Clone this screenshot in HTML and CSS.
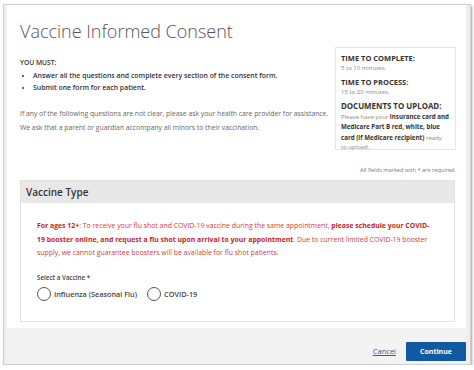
FILE: index.html
```html
<!DOCTYPE html>
<html>
<head>
	<title>Vaccine Informed Consent</title>
	<meta name="viewport" content="width=device-width, initial-scale=1">
	<link rel="stylesheet" href="styles.css">
</head>
<body>

	<div class="modal">
		<div class="modal-body">
			<h1 class="title">Vaccine Informed Consent</h1>

			<div class="intro">
				<div class="intro-main">
					<p class="must">YOU MUST:</p>
					<ul class="rules">
						<li>Answer all the questions and complete every section of the consent form.</li>
						<li>Submit one form for each patient.</li>
					</ul>
					<p class="note first">If any of the following questions are not clear, please ask your health care provider for assistance.</p>
					<p class="note">We ask that a parent or guardian accompany all minors to their vaccination.</p>
				</div>

				<aside class="info">
					<h4>TIME TO COMPLETE:</h4>
					<p>5 to 10 minutes.</p>
					<h4 class="gap">TIME TO PROCESS:</h4>
					<p>15 to 20 minutes.</p>
					<h4 class="gap big">DOCUMENTS TO UPLOAD:</h4>
					<p class="docs">Please have your <b>insurance card and<br>Medicare Part B red, white, blue<br>card (if Medicare recipient)</b> ready<br>to upload.</p>
				</aside>
			</div>

			<p class="required">All fields marked with * are required.</p>

			<div class="card">
				<div class="card-head">Vaccine Type</div>
				<div class="card-body">
					<p class="notice"><b>For ages 12+</b>: To receive your flu shot and COVID-19 vaccine during the same appointment, <b>please schedule your COVID-<br>19 booster online, and request a flu shot upon arrival to your appointment</b>. Due to current limited COVID-19 booster<br>supply, we cannot guarantee boosters will be available for flu shot patients.</p>

					<div class="field-label">Select a Vaccine *</div>
					<div class="radios">
						<label class="radio"><span class="dot"></span>Influenza (Seasonal Flu)</label>
						<label class="radio"><span class="dot"></span>COVID-19</label>
					</div>
				</div>
			</div>
		</div>

		<div class="modal-foot">
			<a href="#" class="cancel">Cancel</a>
			<button class="continue">Continue</button>
		</div>
	</div>

</body>
</html>
```

FILE: styles.css
```css
* {
	box-sizing: border-box;
}

html, body {
	margin: 0;
	background: #fff;
	font-family: "Open Sans", "Noto Sans", sans-serif;
	color: #555;
}

.modal {
	margin: 4px 3px 0 3px;
	padding: 0 4px 0 3px;
	background-color: #efefef;
	border: 1px solid #cfcfcf;
	box-shadow: 1px 2px 2px rgba(0, 0, 0, 0.35);
}

.modal-body {
	background: #fff;
	padding: 12px 10px 6px 13px;
}

.title {
	margin: 0;
	font-size: 18px;
	line-height: 28px;
	font-weight: 300;
	color: #555;
}

.intro {
	display: flex;
	align-items: flex-start;
	margin-top: 2px;
}

.intro-main {
	flex: 1;
	padding-top: 11px;
}

.must {
	margin: 0;
	font-size: 6.7px;
	line-height: 10px;
	font-weight: 600;
	color: #333;
}

.rules {
	margin: 2px 0 0 0;
	padding-left: 13px;
	font-size: 6.9px;
	line-height: 12px;
	font-weight: 600;
	color: #333;
}

.note {
	margin: 0;
	font-size: 6.8px;
	line-height: 14px;
	color: #666;
}

.note.first {
	margin-top: 13px;
}

.info {
	width: 121px;
	height: 103px;
	border: 1px solid #e6e6e6;
	padding: 5px 5px 0 5px;
}

.info h4 {
	margin: 0;
	font-size: 7.5px;
	line-height: 10px;
	font-weight: 700;
	color: #333;
}

.info h4.gap {
	margin-top: 4px;
}

.info h4.big {
	font-size: 7.9px;
}

.info p {
	margin: 1px 0 0 0;
	font-size: 6px;
	line-height: 9px;
	color: #888;
}

.info p.docs {
	line-height: 9.4px;
	white-space: nowrap;
}

.info p b {
	color: #333;
	font-size: 6.2px;
}

.required {
	margin: 15px 0 0 0;
	text-align: right;
	font-size: 5.6px;
	line-height: 10px;
	color: #777;
}

.card {
	margin-top: 5px;
	margin-right: 1px;
	border: 1px solid #e2e2e2;
}

.card-head {
	height: 22px;
	line-height: 22px;
	padding-left: 5px;
	background-color: #e8e8e8;
	font-size: 10px;
	font-weight: 600;
	color: #333;
}

.card-body {
	padding: 16px 10px 20px 16px;
}

.notice {
	margin: 0;
	font-size: 6.9px;
	line-height: 13.5px;
	color: #d9373d;
	white-space: nowrap;
}

.notice b {
	color: #cc2229;
	font-weight: 700;
}

.field-label {
	margin-top: 13px;
	font-size: 6.3px;
	line-height: 10px;
	color: #444;
	font-weight: 600;
}

.radios {
	display: flex;
	gap: 10px;
	margin-top: 4px;
}

.radio {
	display: flex;
	align-items: center;
	gap: 3px;
	font-size: 7.3px;
	font-weight: 600;
	color: #444;
}

.dot {
	width: 14px;
	height: 14px;
	border-radius: 50%;
	border: 1px solid #555;
	background: #fff;
}

.modal-foot {
	height: 36px;
	display: flex;
	justify-content: flex-end;
	align-items: flex-start;
	gap: 10px;
	padding-top: 14px;
	background-color: #f3f3f3;
}

.cancel {
	margin-top: 4px;
	font-size: 7.5px;
	color: #2a5d9f;
	text-decoration: underline;
}

.continue {
	width: 60px;
	height: 19px;
	padding: 0;
	border: none;
	border-radius: 1px;
	background-color: #0f5aa0;
	color: #fff;
	font-family: "Open Sans", sans-serif;
	font-size: 7px;
	font-weight: 700;
}
```
